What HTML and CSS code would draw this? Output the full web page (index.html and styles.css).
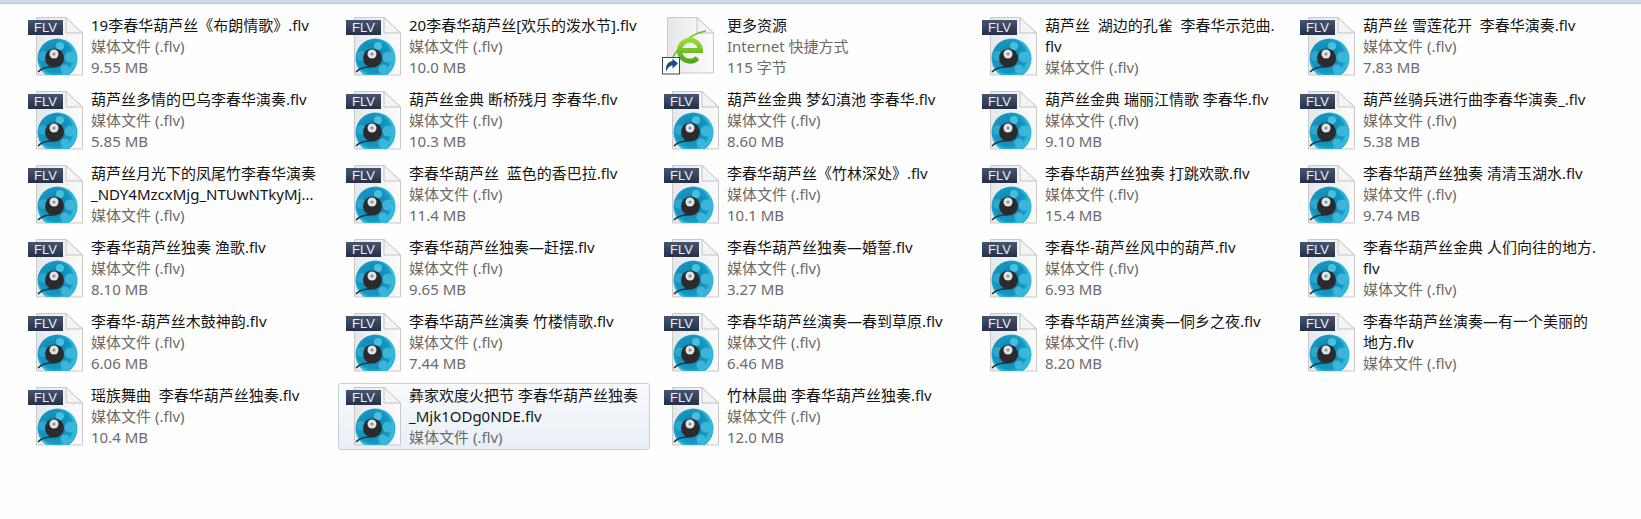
FILE: index.html
```html
<!DOCTYPE html>
<html lang="zh-CN">

<head>
    <meta charset="UTF-8">
    <title>葫芦丝</title>
    <link rel="stylesheet" href="styles.css">
</head>

<body>
    <svg class="icon-defs" xmlns="http://www.w3.org/2000/svg">
        <defs>
            <linearGradient id="sheet" x1="0" y1="0" x2="1" y2="0">
                <stop offset="0" stop-color="#e6e7e8" />
                <stop offset="1" stop-color="#fbfbfb" />
            </linearGradient>
            <linearGradient id="egreen" x1="0" y1="0" x2="0" y2="1">
                <stop offset="0" stop-color="#9ad83a" />
                <stop offset="1" stop-color="#4fa818" />
            </linearGradient>
            <radialGradient id="reel" cx=".45" cy=".45" r=".6">
                <stop offset="0" stop-color="#0f7fa8" />
                <stop offset=".7" stop-color="#1597c2" />
                <stop offset=".82" stop-color="#33bfdf" />
                <stop offset="1" stop-color="#1fa6cf" />
            </radialGradient>
            <clipPath id="reelClip">
                <rect x="8" y="18" width="47" height="40" />
            </clipPath>
        </defs>
        <symbol id="flv" viewBox="0 0 56 60">
            <path class="sheet" d="M8.5 .5H38L54.5 16V58H8.5Z" />
            <path class="fold" d="M38 .5V16H54.5Z" />
            <g clip-path="url(#reelClip)">
                <circle cx="29.5" cy="41.5" r="20" fill="url(#reel)" />
                <circle cx="42" cy="40" r="5.5" fill="#3eb4d8" />
                <circle cx="37" cy="52" r="4.5" fill="#3eb4d8" />
                <circle cx="15.5" cy="39" r="5" fill="#2fa6cd" />
                <circle cx="32" cy="29" r="4" fill="#49bedd" />
                <path d="M10 55C16 49 21 51 27 49" fill="none" stroke="#10303f" stroke-width="1.5" />
                <circle cx="26.5" cy="41" r="9.5" fill="#2b2a2c" />
                <circle cx="26" cy="37" r="4.5" fill="#dfe4e6" />
                <circle cx="26" cy="37" r="1.6" fill="#8b9398" />
            </g>
        </symbol>
        <symbol id="link" viewBox="0 0 56 60" overflow="visible">
            <path class="sheet" d="M3.5 .5H33L49.5 16V56H3.5Z" />
            <path class="fold" d="M33 .5V16H49.5Z" />
            <path d="M42 14C28 16 15 27 7 44" fill="none" stroke="#6dbb22" stroke-width="1.4" />
            <path d="M17 33.5H36.5A10.5 10.5 0 1 0 33.5 41" fill="none" stroke="url(#egreen)" stroke-width="5" />
            <rect x="-1.5" y="40.5" width="17" height="16.5" fill="#fff" stroke="#3d4a55" />
            <path d="M2 55C1 48 4.5 44.5 8.5 44V41.5L14 46.5L8.5 51.5V48.5C6 48.5 3.5 51 2 55Z" fill="#1a4f9c" />
        </symbol>
    </svg>

    <div class="top-line"></div>

    <div class="file-grid">
        <div class="file">
            <div class="file-icon"><svg><use href="#flv" /></svg><span class="badge">FLV</span></div>
            <div class="file-text">
                <div class="file-name">19李春华葫芦丝《布朗情歌》.flv</div>
                <div class="file-meta">媒体文件 (.flv)</div>
                <div class="file-meta">9.55 MB</div>
            </div>
        </div>
        <div class="file">
            <div class="file-icon"><svg><use href="#flv" /></svg><span class="badge">FLV</span></div>
            <div class="file-text">
                <div class="file-name">20李春华葫芦丝[欢乐的泼水节].flv</div>
                <div class="file-meta">媒体文件 (.flv)</div>
                <div class="file-meta">10.0 MB</div>
            </div>
        </div>
        <div class="file">
            <div class="file-icon"><svg><use href="#link" /></svg></div>
            <div class="file-text">
                <div class="file-name">更多资源</div>
                <div class="file-meta">Internet 快捷方式</div>
                <div class="file-meta">115 字节</div>
            </div>
        </div>
        <div class="file">
            <div class="file-icon"><svg><use href="#flv" /></svg><span class="badge">FLV</span></div>
            <div class="file-text">
                <div class="file-name">葫芦丝  湖边的孔雀  李春华示范曲.<br>flv</div>
                <div class="file-meta">媒体文件 (.flv)</div>
            </div>
        </div>
        <div class="file">
            <div class="file-icon"><svg><use href="#flv" /></svg><span class="badge">FLV</span></div>
            <div class="file-text">
                <div class="file-name">葫芦丝 雪莲花开  李春华演奏.flv</div>
                <div class="file-meta">媒体文件 (.flv)</div>
                <div class="file-meta">7.83 MB</div>
            </div>
        </div>

        <div class="file">
            <div class="file-icon"><svg><use href="#flv" /></svg><span class="badge">FLV</span></div>
            <div class="file-text">
                <div class="file-name">葫芦丝多情的巴乌李春华演奏.flv</div>
                <div class="file-meta">媒体文件 (.flv)</div>
                <div class="file-meta">5.85 MB</div>
            </div>
        </div>
        <div class="file">
            <div class="file-icon"><svg><use href="#flv" /></svg><span class="badge">FLV</span></div>
            <div class="file-text">
                <div class="file-name">葫芦丝金典 断桥残月 李春华.flv</div>
                <div class="file-meta">媒体文件 (.flv)</div>
                <div class="file-meta">10.3 MB</div>
            </div>
        </div>
        <div class="file">
            <div class="file-icon"><svg><use href="#flv" /></svg><span class="badge">FLV</span></div>
            <div class="file-text">
                <div class="file-name">葫芦丝金典 梦幻滇池 李春华.flv</div>
                <div class="file-meta">媒体文件 (.flv)</div>
                <div class="file-meta">8.60 MB</div>
            </div>
        </div>
        <div class="file">
            <div class="file-icon"><svg><use href="#flv" /></svg><span class="badge">FLV</span></div>
            <div class="file-text">
                <div class="file-name">葫芦丝金典 瑞丽江情歌 李春华.flv</div>
                <div class="file-meta">媒体文件 (.flv)</div>
                <div class="file-meta">9.10 MB</div>
            </div>
        </div>
        <div class="file">
            <div class="file-icon"><svg><use href="#flv" /></svg><span class="badge">FLV</span></div>
            <div class="file-text">
                <div class="file-name">葫芦丝骑兵进行曲李春华演奏_.flv</div>
                <div class="file-meta">媒体文件 (.flv)</div>
                <div class="file-meta">5.38 MB</div>
            </div>
        </div>

        <div class="file">
            <div class="file-icon"><svg><use href="#flv" /></svg><span class="badge">FLV</span></div>
            <div class="file-text">
                <div class="file-name">葫芦丝月光下的凤尾竹李春华演奏<br>_NDY4MzcxMjg_NTUwNTkyMj...</div>
                <div class="file-meta">媒体文件 (.flv)</div>
            </div>
        </div>
        <div class="file">
            <div class="file-icon"><svg><use href="#flv" /></svg><span class="badge">FLV</span></div>
            <div class="file-text">
                <div class="file-name">李春华葫芦丝  蓝色的香巴拉.flv</div>
                <div class="file-meta">媒体文件 (.flv)</div>
                <div class="file-meta">11.4 MB</div>
            </div>
        </div>
        <div class="file">
            <div class="file-icon"><svg><use href="#flv" /></svg><span class="badge">FLV</span></div>
            <div class="file-text">
                <div class="file-name">李春华葫芦丝《竹林深处》.flv</div>
                <div class="file-meta">媒体文件 (.flv)</div>
                <div class="file-meta">10.1 MB</div>
            </div>
        </div>
        <div class="file">
            <div class="file-icon"><svg><use href="#flv" /></svg><span class="badge">FLV</span></div>
            <div class="file-text">
                <div class="file-name">李春华葫芦丝独奏 打跳欢歌.flv</div>
                <div class="file-meta">媒体文件 (.flv)</div>
                <div class="file-meta">15.4 MB</div>
            </div>
        </div>
        <div class="file">
            <div class="file-icon"><svg><use href="#flv" /></svg><span class="badge">FLV</span></div>
            <div class="file-text">
                <div class="file-name">李春华葫芦丝独奏 清清玉湖水.flv</div>
                <div class="file-meta">媒体文件 (.flv)</div>
                <div class="file-meta">9.74 MB</div>
            </div>
        </div>

        <div class="file">
            <div class="file-icon"><svg><use href="#flv" /></svg><span class="badge">FLV</span></div>
            <div class="file-text">
                <div class="file-name">李春华葫芦丝独奏 渔歌.flv</div>
                <div class="file-meta">媒体文件 (.flv)</div>
                <div class="file-meta">8.10 MB</div>
            </div>
        </div>
        <div class="file">
            <div class="file-icon"><svg><use href="#flv" /></svg><span class="badge">FLV</span></div>
            <div class="file-text">
                <div class="file-name">李春华葫芦丝独奏—赶摆.flv</div>
                <div class="file-meta">媒体文件 (.flv)</div>
                <div class="file-meta">9.65 MB</div>
            </div>
        </div>
        <div class="file">
            <div class="file-icon"><svg><use href="#flv" /></svg><span class="badge">FLV</span></div>
            <div class="file-text">
                <div class="file-name">李春华葫芦丝独奏—婚誓.flv</div>
                <div class="file-meta">媒体文件 (.flv)</div>
                <div class="file-meta">3.27 MB</div>
            </div>
        </div>
        <div class="file">
            <div class="file-icon"><svg><use href="#flv" /></svg><span class="badge">FLV</span></div>
            <div class="file-text">
                <div class="file-name">李春华-葫芦丝风中的葫芦.flv</div>
                <div class="file-meta">媒体文件 (.flv)</div>
                <div class="file-meta">6.93 MB</div>
            </div>
        </div>
        <div class="file">
            <div class="file-icon"><svg><use href="#flv" /></svg><span class="badge">FLV</span></div>
            <div class="file-text">
                <div class="file-name">李春华葫芦丝金典 人们向往的地方.<br>flv</div>
                <div class="file-meta">媒体文件 (.flv)</div>
            </div>
        </div>

        <div class="file">
            <div class="file-icon"><svg><use href="#flv" /></svg><span class="badge">FLV</span></div>
            <div class="file-text">
                <div class="file-name">李春华-葫芦丝木鼓神韵.flv</div>
                <div class="file-meta">媒体文件 (.flv)</div>
                <div class="file-meta">6.06 MB</div>
            </div>
        </div>
        <div class="file">
            <div class="file-icon"><svg><use href="#flv" /></svg><span class="badge">FLV</span></div>
            <div class="file-text">
                <div class="file-name">李春华葫芦丝演奏 竹楼情歌.flv</div>
                <div class="file-meta">媒体文件 (.flv)</div>
                <div class="file-meta">7.44 MB</div>
            </div>
        </div>
        <div class="file">
            <div class="file-icon"><svg><use href="#flv" /></svg><span class="badge">FLV</span></div>
            <div class="file-text">
                <div class="file-name">李春华葫芦丝演奏—春到草原.flv</div>
                <div class="file-meta">媒体文件 (.flv)</div>
                <div class="file-meta">6.46 MB</div>
            </div>
        </div>
        <div class="file">
            <div class="file-icon"><svg><use href="#flv" /></svg><span class="badge">FLV</span></div>
            <div class="file-text">
                <div class="file-name">李春华葫芦丝演奏—侗乡之夜.flv</div>
                <div class="file-meta">媒体文件 (.flv)</div>
                <div class="file-meta">8.20 MB</div>
            </div>
        </div>
        <div class="file">
            <div class="file-icon"><svg><use href="#flv" /></svg><span class="badge">FLV</span></div>
            <div class="file-text">
                <div class="file-name">李春华葫芦丝演奏—有一个美丽的<br>地方.flv</div>
                <div class="file-meta">媒体文件 (.flv)</div>
            </div>
        </div>

        <div class="file">
            <div class="file-icon"><svg><use href="#flv" /></svg><span class="badge">FLV</span></div>
            <div class="file-text">
                <div class="file-name">瑶族舞曲  李春华葫芦丝独奏.flv</div>
                <div class="file-meta">媒体文件 (.flv)</div>
                <div class="file-meta">10.4 MB</div>
            </div>
        </div>
        <div class="file selected">
            <div class="file-icon"><svg><use href="#flv" /></svg><span class="badge">FLV</span></div>
            <div class="file-text">
                <div class="file-name">彝家欢度火把节 李春华葫芦丝独奏<br>_Mjk1ODg0NDE.flv</div>
                <div class="file-meta">媒体文件 (.flv)</div>
            </div>
        </div>
        <div class="file">
            <div class="file-icon"><svg><use href="#flv" /></svg><span class="badge">FLV</span></div>
            <div class="file-text">
                <div class="file-name">竹林晨曲 李春华葫芦丝独奏.flv</div>
                <div class="file-meta">媒体文件 (.flv)</div>
                <div class="file-meta">12.0 MB</div>
            </div>
        </div>
    </div>
</body>

</html>
```

FILE: styles.css
```css
body {
    margin: 0;
    background-color: #fefefe;
    font-family: "Noto Sans", "Noto Sans CJK SC", sans-serif;
    font-size: 15px;
    line-height: 21px;
}

.icon-defs {
    display: block;
    width: 0;
    height: 0;
}

.top-line {
    height: 3px;
    background-color: #cddae7;
    border-bottom: 1px solid #b9c8d8;
}

.file-grid {
    display: grid;
    grid-template-columns: repeat(5, 312px);
    grid-auto-rows: 67px;
    gap: 7px 6px;
    padding: 9px 0 0 20px;
}

.file {
    display: flex;
    gap: 7px;
    padding: 1px 7px;
    border: 1px solid transparent;
    border-radius: 3px;
}

.selected {
    border-color: #bfd2dc;
    background: linear-gradient(#f8fafc, #e8eff6);
}

.file-icon {
    position: relative;
    flex: none;
    width: 56px;
    height: 60px;
    margin-top: 2px;
}

.file-icon svg {
    display: block;
    width: 56px;
    height: 60px;
    overflow: visible;
}

/* dark FLV label over the page corner */
.badge {
    position: absolute;
    left: 0;
    top: 3px;
    width: 35px;
    height: 15px;
    background: linear-gradient(#46566f, #243049);
    color: #e9eef4;
    font-family: "Liberation Sans", sans-serif;
    font-size: 13px;
    line-height: 15px;
    text-align: center;
}

.file-text {
    min-width: 0;
}

.file-name {
    color: #141414;
    white-space: pre;
}

.file-meta {
    color: #6b6b6b;
    white-space: pre;
}

.sheet {
    fill: url(#sheet);
    stroke: #c9c9c9;
}

.fold {
    fill: #f4f4f4;
    stroke: #c4c4c4;
}
```
